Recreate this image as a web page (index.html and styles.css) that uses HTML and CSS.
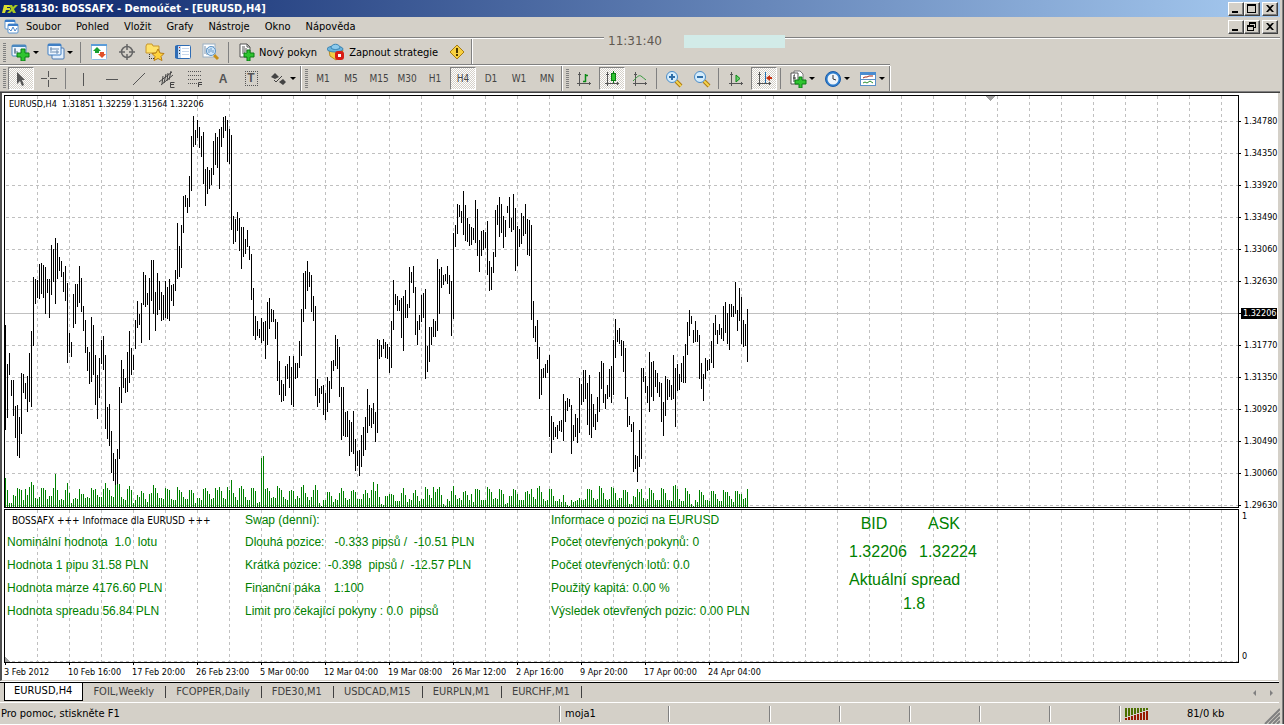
FILE: index.html
```html
<!DOCTYPE html>
<html lang="cs">
  <head>
    <meta charset="UTF-8" />
    <meta name="viewport" content="width=device-width, initial-scale=1.0" />
    <title>58130: BOSSAFX - Demoúčet - [EURUSD,H4]</title>
    <link rel="stylesheet" href="styles.css">
  </head>
  <body>
    <div class="window">
      <header class="titlebar">
        <svg class="logo" width="16" height="12" viewBox="0 0 16 12">
          <path d="M3 2h5v2H5v1h3v2H4l-1 3H0l2-8z" fill="#d8dc30" />
          <path d="M7 2h3l1 2 2-2h3l-4 4 2 4h-3l-1-2-2 2H5l4-4z" fill="#a8c820" />
        </svg>
        <h1>58130: BOSSAFX - Demoúčet - [EURUSD,H4]</h1>
        <div class="controls">
          <button aria-label="Minimalizovat"><svg width="12" height="10"><path d="M2 7h6v2H2z" /></svg></button>
          <button aria-label="Maximalizovat"><svg width="12" height="10"><path d="M1 0h9v9H1zM2 2v6h7V2z" fill-rule="evenodd" /></svg></button>
          <button class="close" aria-label="Zavřít"><svg width="12" height="10"><path d="M2 1h2l2 2 2-2h2L7 4.500 10 8H8L6 6 4 8H2l3-3.500z" /></svg></button>
        </div>
      </header>

      <nav class="menubar">
        <svg class="menu-icon" width="16" height="16" viewBox="0 0 16 16">
          <rect x="1" y="1" width="10" height="9" rx="1" fill="#fff" stroke="#5a94d0" />
          <path d="M1 2h10" stroke="#3a7cc8" stroke-width="2" />
          <rect x="4" y="5" width="10" height="9" rx="1" fill="#fff" stroke="#5a94d0" />
          <path d="M4 6h10" stroke="#3a7cc8" stroke-width="2" />
          <path d="M5 10l2 2 2-4 2 4 2-3" fill="none" stroke="#4a84c8" />
        </svg>
        <button>Soubor</button>
        <button>Pohled</button>
        <button>Vložit</button>
        <button>Grafy</button>
        <button>Nástroje</button>
        <button>Okno</button>
        <button>Nápověda</button>
        <div class="controls">
          <button aria-label="Minimalizovat graf"><svg width="12" height="10"><path d="M2 7h6v2H2z" /></svg></button>
          <button aria-label="Obnovit graf"><svg width="12" height="10"><path d="M3 0h7v6H8V5h1V2H4v1H3zM1 3h7v6H1zM2 5v3h5V5z" fill-rule="evenodd" /></svg></button>
          <button class="close" aria-label="Zavřít graf"><svg width="12" height="10"><path d="M2 1h2l2 2 2-2h2L7 4.500 10 8H8L6 6 4 8H2l3-3.500z" /></svg></button>
        </div>
      </nav>

      <div class="toolbars">
        <div class="toolbar-row upper">
          <div class="toolbar">
            <span class="grip"></span>
            <button class="drop" aria-label="Nový graf">
              <svg width="20" height="18" viewBox="0 0 20 18">
                <rect x="1" y="2" width="14" height="11" rx="1" fill="#eef6ff" stroke="#4a88c0" />
                <path d="M1 3h14" stroke="#4a88c0" stroke-width="2" />
                <path d="M4 5v6M3 9h4M3 7h2" stroke="#58748c" />
                <path d="M10 6h4v4h4v4h-4v4h-4v-4H6v-4h4z" fill="#2fc42f" stroke="#0a7d14" />
              </svg>
            </button>
            <button class="drop" aria-label="Profily">
              <svg width="18" height="18" viewBox="0 0 18 18">
                <rect x="5" y="5" width="12" height="11" rx="1" fill="#e4f0fc" stroke="#4a78b0" />
                <rect x="1" y="1" width="13" height="11" rx="1" fill="#eef6ff" stroke="#3f7fc4" />
                <path d="M1 2h13" stroke="#3f7fc4" stroke-width="2" />
                <path d="M3 6h9M3 9h9M4 4v4M10 7v4" stroke="#6a8cb0" />
              </svg>
            </button>
            <span class="sep"></span>
            <button aria-label="Přehled trhu">
              <svg width="16" height="16" viewBox="0 0 16 16">
                <rect x="0.500" y="0.500" width="15" height="15" rx="1" fill="#fff" stroke="#8fbce4" />
                <path d="M0 1h16" stroke="#5b9cd8" stroke-width="2" />
                <path d="M6 3l4 4H8v2H4V7H2z" fill="#19a030" />
                <path d="M11 14l-4-4h2V8h4v2h2z" fill="#e05028" />
              </svg>
            </button>
            <button aria-label="Okno dat">
              <svg width="16" height="16" viewBox="0 0 16 16" fill="none" stroke="#666" stroke-width="1.500">
                <circle cx="8" cy="8" r="5.500" />
                <path d="M8 0v6M8 10v6M0 8h6M10 8h6" />
              </svg>
            </button>
            <button aria-label="Navigátor">
              <svg width="20" height="18" viewBox="0 0 20 18">
                <path d="M1 3l1-2h5l1 2h6v7H1z" fill="#ffe26a" stroke="#c8962c" />
                <path d="M4.500 11v6M6 15.500h3" stroke="#333" stroke-dasharray="1 1" />
                <path d="M13 6l2 4 4 .500-3 3 1 4-4-2-4 2 1-4-3-3 4-.500z" fill="#ffd23c" stroke="#b87c14" />
              </svg>
            </button>
            <button aria-label="Terminál">
              <svg width="16" height="16" viewBox="0 0 16 16">
                <rect x="0.500" y="1.500" width="15" height="13" rx="1" fill="#fff" stroke="#2f6cb4" />
                <path d="M0 2h3v12H0z" fill="#2f6cb4" />
                <path d="M3 2h3v12H3z" fill="#c4dcf4" />
                <path d="M7 4.500h7M7 7.500h7M7 10.500h7" stroke="#c8d8ec" />
                <path d="M4 3h1v1H4z" fill="#c02020" />
                <path d="M4 6h1v1H4zM4 9h1v1H4z" fill="#333" />
              </svg>
            </button>
            <button aria-label="Tester strategií">
              <svg width="18" height="18" viewBox="0 0 18 18">
                <rect x="1" y="1" width="12" height="13" fill="#fff" stroke="#9ab0c4" />
                <path d="M3 3v8M5 5v7M11 3v5" stroke="#7890a8" />
                <path d="M12 12l4 4" stroke="#c89018" stroke-width="3" />
                <circle cx="9" cy="8" r="4.500" fill="#cfe6fa" stroke="#5a94c8" />
                <path d="M7 10V6M9 9V5M11 10V7" stroke="#6898c4" />
              </svg>
            </button>
            <span class="sep"></span>
            <button class="labelled">
              <svg width="17" height="18" viewBox="0 0 17 18">
                <path d="M2 1h7l3 3v10H2z" fill="#fff" stroke="#555" />
                <path d="M9 1v3h3M4 4h3M4 6h5M4 8h5M4 10h3" fill="none" stroke="#555" />
                <path d="M9 7h3v3h4v4h-4v4H9v-4H6v-4h3z" fill="#2fc42f" stroke="#0a7d14" />
              </svg>
              Nový pokyn
            </button>
            <button class="labelled">
              <svg width="18" height="18" viewBox="0 0 18 18">
                <path d="M2 7h14l-2 6-5 4-6-4z" fill="#f4cc44" stroke="#b88a20" />
                <ellipse cx="8" cy="6" rx="8" ry="3" fill="#6cb4dc" stroke="#3a84b4" />
                <path d="M4 5c0-5 9-5 9 0-2 2-7 2-9 0z" fill="#8ccaec" stroke="#3a84b4" />
                <rect x="8" y="8" width="9" height="9" rx="3" fill="#d81c14" />
                <path d="M11 11h3v3h-3z" fill="#fff" />
              </svg>
              Zapnout strategie
            </button>
            <button aria-label="Upozornění">
              <svg width="16" height="16" viewBox="0 0 16 16">
                <path d="M8 1l7 7-7 7-7-7z" fill="#f8d040" stroke="#a87c10" stroke-linejoin="round" />
                <path d="M7 4h2v5H7zM7 10h2v2H7z" fill="#4a3800" />
              </svg>
            </button>
          </div>
        </div>

        <div class="toolbar-row lower">
          <div class="toolbar">
            <span class="grip"></span>
            <button class="pressed" aria-label="Kurzor">
              <svg width="14" height="16" viewBox="0 0 14 16"><path d="M3 1l8 8H8l2 5-2 1-2-5-3 3z" fill="#555" /></svg>
            </button>
            <button aria-label="Zaměřovač">
              <svg width="16" height="16" viewBox="0 0 16 16" fill="#555"><path d="M7 0h1v6H7zM7 9h1v7H7zM0 7h6v1H0zM9 7h7v1H9z" /></svg>
            </button>
            <span class="sep"></span>
            <button aria-label="Svislá čára">
              <svg width="16" height="16" viewBox="0 0 16 16" fill="#555"><path d="M8 2h1v13H8z" /></svg>
            </button>
            <button aria-label="Vodorovná čára">
              <svg width="16" height="16" viewBox="0 0 16 16" fill="#555"><path d="M3 8h12v1H3z" /></svg>
            </button>
            <button aria-label="Trendová čára">
              <svg width="16" height="16" viewBox="0 0 16 16"><path d="M2 14L14 2" stroke="#555" /></svg>
            </button>
            <button aria-label="Ekvidistantní kanál">
              <svg width="18" height="18" viewBox="0 0 18 18" fill="none" stroke="#444">
                <path d="M1 12L14 2M3 15L15 5M5 6L4 14M8 4L6 13M10 3L9 11M13 1l-2 9" />
                <path d="M16.500 12.500h-4v5h4M12 14.500h4" />
              </svg>
            </button>
            <button aria-label="Fibonacci">
              <svg width="18" height="18" viewBox="0 0 18 18" fill="none" stroke="#555">
                <path d="M2 1.500h14M2 5.500h14M2 9.500h14M2 13.500h9" stroke-dasharray="1 1" />
                <path d="M16 12.500h-3.500V17M12 14.500h4" stroke="#444" />
              </svg>
            </button>
            <button class="glyph" aria-label="Text">A</button>
            <button class="glyph boxed" aria-label="Textový popisek"><span>T</span></button>
            <button class="drop" aria-label="Šipky">
              <svg width="18" height="16" viewBox="0 0 18 16" fill="#444">
                <path d="M5 2l4 4-4 2-4-2zM13 8l3 3-3 3-4-3z" />
                <path d="M4 9l2 2 6-6" fill="none" stroke="#444" stroke-width="1" />
              </svg>
            </button>
          </div>

          <div class="toolbar">
            <span class="grip"></span>
            <button class="period">M1</button>
            <button class="period">M5</button>
            <button class="period">M15</button>
            <button class="period">M30</button>
            <button class="period">H1</button>
            <button class="period pressed">H4</button>
            <button class="period">D1</button>
            <button class="period">W1</button>
            <button class="period">MN</button>
          </div>

          <div class="toolbar">
            <span class="grip"></span>
            <button aria-label="Sloupcový graf">
              <svg width="16" height="16" viewBox="0 0 16 16" fill="none" stroke="#555">
                <path d="M3.500 1v14M1 12.500h14M2 3.500h3M13.500 11v3" />
                <path d="M9.500 3v8M9 4.500h3M7 10.500h3" stroke="#0a8a14" stroke-width="1.500" />
              </svg>
            </button>
            <button class="pressed" aria-label="Svíčkový graf">
              <svg width="16" height="16" viewBox="0 0 16 16" fill="none" stroke="#555">
                <path d="M3.500 1v14M1 12.500h14M2 3.500h3M13.500 11v3" />
                <path d="M9.500 0v12" stroke="#0a7d14" />
                <rect x="7.500" y="2.500" width="4" height="7" fill="#2fc42f" stroke="#0a7d14" />
              </svg>
            </button>
            <button aria-label="Čárový graf">
              <svg width="16" height="16" viewBox="0 0 16 16" fill="none" stroke="#555">
                <path d="M3.500 1v14M1 12.500h14M2 3.500h3M13.500 11v3" />
                <path d="M1 10c5-5 6-6 8-5s3 3 5 4" stroke="#3a9a40" />
              </svg>
            </button>
            <span class="sep"></span>
            <button aria-label="Přiblížit">
              <svg width="18" height="18" viewBox="0 0 18 18">
                <path d="M11 11l5 5" stroke="#b07c10" stroke-width="4" />
                <path d="M11 11l5 5" stroke="#f4d450" stroke-width="2" />
                <circle cx="7" cy="7" r="5.500" fill="#d4ecfc" stroke="#4a8cc8" />
                <path d="M7 4v6M4 7h6" stroke="#2f6ea8" stroke-width="2" />
              </svg>
            </button>
            <button aria-label="Oddálit">
              <svg width="18" height="18" viewBox="0 0 18 18">
                <path d="M11 11l5 5" stroke="#b07c10" stroke-width="4" />
                <path d="M11 11l5 5" stroke="#f4d450" stroke-width="2" />
                <circle cx="7" cy="7" r="5.500" fill="#d4ecfc" stroke="#4a8cc8" />
                <path d="M4 7h6" stroke="#2f6ea8" stroke-width="2" />
              </svg>
            </button>
            <span class="sep"></span>
            <button aria-label="Automatický posun">
              <svg width="16" height="16" viewBox="0 0 16 16" fill="none" stroke="#555">
                <path d="M3.500 1v14M1 12.500h14M2 3.500h3M13.500 11v3" />
                <path d="M8 4l4 3.500L8 11z" fill="#6cd070" stroke="#0a8a14" />
              </svg>
            </button>
            <button class="pressed" aria-label="Odsazení grafu">
              <svg width="16" height="16" viewBox="0 0 16 16" fill="none" stroke="#555">
                <path d="M3.500 1v14M1 12.500h14M2 3.500h3M13.500 11v3" />
                <path d="M9.500 1v11" stroke="#2070b0" />
                <path d="M14 4v6l-4-3z" fill="#c83010" stroke="none" />
                <path d="M13 7h3" stroke="#c83010" stroke-width="2" />
              </svg>
            </button>
            <span class="sep"></span>
            <button class="drop" aria-label="Indikátory">
              <svg width="18" height="18" viewBox="0 0 18 18">
                <path d="M5 1h6l3 3v8H5z" fill="#fff" stroke="#777" />
                <path d="M2 3h7v11H2z" fill="#fff" stroke="#555" />
                <path d="M6 5H5v7M4 8h3" fill="none" stroke="#333" />
                <path d="M10 7h3v3h4v4h-4v4h-3v-4H6v-4h4z" fill="#2fc42f" stroke="#0a7d14" />
              </svg>
            </button>
            <button class="drop" aria-label="Periody">
              <svg width="18" height="18" viewBox="0 0 18 18">
                <circle cx="9" cy="9" r="7.500" fill="#2f80d0" stroke="#1c5ca8" />
                <circle cx="9" cy="9" r="5.500" fill="#eef4fa" />
                <path d="M9 5v4l3 1" fill="none" stroke="#333" />
              </svg>
            </button>
            <button class="drop" aria-label="Šablony">
              <svg width="18" height="16" viewBox="0 0 18 16">
                <rect x="1.500" y="1.500" width="15" height="13" fill="#fff" stroke="#5a90c8" />
                <path d="M1 2.500h16" stroke="#4a8cd0" stroke-width="3" />
                <path d="M2 8.500h14" stroke="#5a90c8" />
                <path d="M4 7l2-1h2l2-1h4" fill="none" stroke="#a02818" />
                <path d="M4 12l2-1 2 1 3-2 3 2" fill="none" stroke="#2a9030" />
              </svg>
            </button>
          </div>
        </div>
      </div>

      <main class="chart">
        <section class="plot price-plot" id="pricePlot">
          <svg class="layer" id="priceLayer"></svg>
          <p class="quote">EURUSD,H4  1.31851 1.32259 1.31564 1.32206</p>
        </section>
        <ul class="scale">
          <li>1.34780</li>
          <li>1.34350</li>
          <li>1.33920</li>
          <li>1.33490</li>
          <li>1.33060</li>
          <li>1.32630</li>
          <li class="current"><span>1.32206</span></li>
          <li>1.31770</li>
          <li>1.31350</li>
          <li>1.30920</li>
          <li>1.30490</li>
          <li>1.30060</li>
          <li>1.29630</li>
        </ul>

        <section class="plot info-plot" id="infoPlot">
          <svg class="layer" id="infoLayer"></svg>
          <div class="info">
            <div class="info-col">
              <p class="info-title">BOSSAFX +++ Informace dla EURUSD +++</p>
              <p>Nominální hodnota  1.0  lotu</p>
              <p>Hodnota 1 pipu 31.58 PLN</p>
              <p>Hodnota marze 4176.60 PLN</p>
              <p>Hodnota spreadu 56.84 PLN</p>
            </div>
            <div class="info-col">
              <p>Swap (denní):</p>
              <p>Dlouhá pozice:   -0.333 pipsů /  -10.51 PLN</p>
              <p>Krátká pozice:  -0.398  pipsů /  -12.57 PLN</p>
              <p>Finanční páka    1:100</p>
              <p>Limit pro čekající pokyny : 0.0  pipsů</p>
            </div>
            <div class="info-col">
              <p>Informace o pozici na EURUSD</p>
              <p>Počet otevřených pokynů: 0</p>
              <p>Počet otevřených lotů: 0.0</p>
              <p>Použitý kapitá: 0.00 %</p>
              <p>Výsledek otevřených pozic: 0.00 PLN</p>
            </div>
            <div class="spread">
              <p class="pair"><span>BID</span><span>ASK</span></p>
              <p class="pair"><span>1.32206</span><span>1.32224</span></p>
              <p>Aktuální spread</p>
              <p class="spread-value">1.8</p>
            </div>
          </div>
        </section>
        <div class="info-scale"><span>1</span><span>0</span></div>

        <ol class="times">
          <li>3 Feb 2012</li>
          <li>10 Feb 16:00</li>
          <li>17 Feb 20:00</li>
          <li>26 Feb 23:00</li>
          <li>5 Mar 00:00</li>
          <li>12 Mar 04:00</li>
          <li>19 Mar 08:00</li>
          <li>26 Mar 12:00</li>
          <li>2 Apr 16:00</li>
          <li>9 Apr 20:00</li>
          <li>17 Apr 00:00</li>
          <li>24 Apr 04:00</li>
        </ol>
      </main>

      <nav class="tabs">
        <button class="active">EURUSD,H4</button>
        <button>FOIL,Weekly</button>
        <button>FCOPPER,Daily</button>
        <button>FDE30,M1</button>
        <button>USDCAD,M15</button>
        <button>EURPLN,M1</button>
        <button>EURCHF,M1</button>
        <span class="scroll">
          <svg width="24" height="8" viewBox="0 0 24 8" fill="#808080"><path d="M5 1v6L2 4zM19 1v6l3-3z" /></svg>
        </span>
      </nav>

      <footer class="status">
        <span class="help">Pro pomoc, stiskněte F1</span>
        <span class="profile">moja1</span>
        <span class="cell wide"></span>
        <span class="cell"></span>
        <span class="cell"></span>
        <span class="cell"></span>
        <span class="cell"></span>
        <span class="cell"></span>
        <span class="traffic">
          <svg id="signal" width="24" height="12"></svg>
          <span>81/0 kb</span>
        </span>
        <svg class="resize" width="16" height="16" viewBox="0 0 16 16" stroke="#808080" stroke-width="2">
          <path d="M1 16L16 1M5 16L16 5M9 16l7-7M13 16l3-3" />
        </svg>
      </footer>

      <time class="clock">11:31:40</time>
      <div class="marker"></div>
    </div>
    <script src="chart.js"></script>
  </body>
</html>
```

FILE: styles.css
```css
* {
  box-sizing: border-box;
}

body {
  margin: 0;
  background-color: #fff;
  font-family: "DejaVu Sans Condensed", "DejaVu Sans", sans-serif;
  font-size: 11px;
  color: #000;
}

h1,
p,
ul,
ol {
  margin: 0;
  padding: 0;
  list-style: none;
}

svg {
  display: block;
  flex: none;
}

button {
  font: inherit;
  color: inherit;
  background: none;
  border: none;
  margin: 0;
  padding: 0;
}

.window {
  position: relative;
  background-color: #d4d0c8;
  border-right: 1px solid #404040;
  box-shadow: inset -1px 0 #808080;
  padding-right: 3px;
}

/* title and menu */
.titlebar {
  display: flex;
  align-items: center;
  height: 17px;
  padding: 0 2px;
  background: linear-gradient(to right, #0a246a, #a6caf0);
  color: #fff;
}

.titlebar h1 {
  font-size: 11px;
  margin-left: 2px;
  white-space: nowrap;
}

.controls {
  display: flex;
  margin-left: auto;
}

.controls button {
  display: flex;
  align-items: center;
  justify-content: center;
  width: 16px;
  height: 14px;
  padding: 0;
  background-color: #d4d0c8;
  border: 1px solid;
  border-color: #fff #404040 #404040 #fff;
  box-shadow: inset -1px -1px #808080;
}

.controls .close {
  margin-left: 2px;
}

.menubar {
  display: flex;
  align-items: center;
  height: 21px;
  padding: 0 2px 1px;
  border-bottom: 1px solid #808080;
}

.menu-icon {
  margin: 0 0 0 2px;
}

.menubar > button {
  padding: 0 8px;
  margin-right: -1px;
}

.menu-icon + button {
  padding-left: 6px;
}

/* toolbars */
.toolbars {
  border-top: 1px solid #fff;
  border-bottom: 1px solid #404040;
  box-shadow: inset 0 -1px #808080;
}

.toolbar-row {
  display: flex;
  height: 25px;
}

.toolbar-row.lower {
  width: max-content;
  height: 28px;
  border-top: 1px solid #808080;
  box-shadow: inset 0 1px #fff;
  padding: 1px 0;
}

.toolbar {
  display: flex;
  align-items: center;
  gap: 2px;
  padding: 0 1px 0 3px;
  border-right: 1px solid #808080;
  box-shadow: 1px 0 #fff;
}

.toolbar + .toolbar {
  margin-left: 1px;
}

.grip {
  width: 3px;
  height: 19px;
  background: repeating-linear-gradient(#808080 0 1px, #d4d0c8 1px 2px);
}

.sep {
  width: 2px;
  height: 21px;
  margin: 0 1px;
  border-left: 1px solid #808080;
}

.upper .toolbar {
  padding-top: 1px;
}

.upper .sep {
  margin: 0 2px;
}

.toolbar button {
  display: flex;
  align-items: center;
  justify-content: center;
  width: 26px;
  height: 23px;
}

.toolbar .drop {
  width: 33px;
  gap: 2px;
}

.drop::after {
  content: "";
  border: 3px solid transparent;
  border-top-color: #000;
  border-bottom: 0;
}

.toolbar .labelled {
  width: auto;
  padding: 0 4px;
  gap: 4px;
  white-space: nowrap;
}

.toolbar .pressed {
  background: repeating-conic-gradient(#fff 0 25%, #d4d0c8 0 50%) 0 0 / 2px 2px;
  border: 1px solid;
  border-color: #808080 #fff #fff #808080;
}

.toolbar .period {
  font-size: 10px;
  color: #444;
}

.toolbar .glyph {
  font-family: "Liberation Sans", Arial, sans-serif;
  font-size: 12px;
  font-weight: bold;
  color: #555;
}

.boxed span {
  width: 13px;
  line-height: 13px;
  border: 1px dotted #555;
}

/* chart */
.chart {
  display: grid;
  grid-template-columns: 1fr 39px;
  padding: 2px 0 0 2px;
  margin-right: 1px;
  background-color: #fff;
  border-left: 2px solid #505050;
  border-right: 1px solid #d4d0c8;
  border-bottom: 1px solid #d4d0c8;
  font-size: 9px;
}

.plot {
  position: relative;
  border: 1px solid #000;
}

.price-plot {
  height: 413px;
  margin-bottom: 1px;
}

.info-plot {
  height: 154px;
}

.layer {
  position: absolute;
  left: 0;
  top: 0;
  width: 100%;
  height: 100%;
}

.quote {
  position: relative;
  padding: 2px 4px;
  line-height: 12px;
  white-space: pre;
}

.scale {
  padding-top: 10px;
}

.scale li {
  display: flex;
  align-items: center;
  height: 32px;
  gap: 3px;
}

/* the lowest level sits on the frame of the plot */
.scale li:last-child {
  margin-bottom: -12px;
}

.scale li::before {
  content: "";
  width: 2px;
  height: 1px;
  background-color: #000;
}

.scale .current {
  gap: 0;
}

.current span {
  padding: 0 1px 0 2px;
  line-height: 11px;
  background-color: #000;
  color: #fff;
}

.info {
  position: relative;
  display: grid;
  grid-template-columns: 238px 306px 298px auto;
  padding-left: 2px;
  font-family: "Liberation Sans", Arial, sans-serif;
  font-size: 12px;
  color: #008000;
}

.info p {
  line-height: 23px;
  white-space: pre;
}

.info-col p:first-child {
  line-height: 21px;
}

.info .info-title {
  padding-left: 5px;
  font-family: "DejaVu Sans Condensed", "DejaVu Sans", sans-serif;
  font-size: 10px;
  color: #000;
}

.spread {
  width: 130px;
  font-size: 16px;
}

.info .spread p {
  line-height: 28px;
}

.info .spread .spread-value {
  line-height: 20px;
  text-align: center;
}

.pair {
  display: grid;
  grid-template-columns: 58px 58px;
  gap: 12px;
}

.pair:first-child {
  text-align: center;
  padding-right: 8px;
  grid-template-columns: 50px 66px;
}

.info-scale {
  display: flex;
  flex-direction: column;
  justify-content: space-between;
  padding: 2px 3px;
}

.times {
  display: flex;
  height: 17px;
}

.times li {
  width: 64px;
  white-space: nowrap;
  line-height: 15px;
}

.times li::before {
  content: "";
  display: block;
  width: 1px;
  height: 2px;
  margin-left: 1px;
  background-color: #000;
}

/* sheet tabs */
.tabs {
  display: flex;
  height: 21px;
  margin: 1px 1px 0 0;
  padding-left: 4px;
  border-top: 1px solid #000;
  border-bottom: 1px solid #fff;
  box-shadow: 0 -1px #fff;
  color: #404040;
}

.tabs button {
  position: relative;
  height: 18px;
  padding: 0 12px 2px 10px;
}

.tabs button:not(.active)::after {
  content: "";
  position: absolute;
  right: 0;
  top: 3px;
  width: 1px;
  height: 12px;
  background-color: #404040;
}

.tabs .active {
  padding: 0 10px 2px 9px;
  background-color: #fff;
  color: #000;
  border: 1px solid #000;
  border-top: none;
}

.scroll {
  margin: 6px 4px 0 auto;
}

/* status bar */
.status {
  display: flex;
  align-items: center;
  height: 21px;
}

.status > span {
  height: 16px;
  line-height: 16px;
}

.status > span + span {
  border-left: 1px solid #808080;
  box-shadow: inset 1px 0 #fff;
}

.help {
  flex: 1;
  padding-left: 1px;
}

.profile {
  width: 109px;
  padding-left: 5px;
}

.cell {
  width: 70px;
}

.wide {
  width: 101px;
}

.traffic {
  display: flex;
  align-items: center;
  gap: 38px;
  width: 145px;
  padding-left: 5px;
}

.resize {
  align-self: flex-end;
}

/* clock and marker floating over the toolbars */
.clock,
.marker {
  position: absolute;
  top: 35px;
  height: 13px;
}

.clock {
  left: 604px;
  width: 80px;
  padding-left: 4px;
  line-height: 13px;
  font-family: "DejaVu Sans", sans-serif;
  font-size: 12px;
  color: #605850;
  background-color: #d4d0c8;
}

.marker {
  left: 684px;
  width: 101px;
  background-color: #d2ebe8;
}
```

FILE: chart.js
```js
// Each bar is "top-bottom", in pixels from the top of the plot
const bars = `
229-334 268-322 257-279 284-300 284-320 310-342 309-360 321-362 277-338 278-297
287-303 280-316 257-306 235-311 181-250 183-208 184-202 168-203 167-198 169-202
171-218 183-197 183-222 149-199 153-186 142-208 147-183 161-175 165-181 176-196
170-205 187-267 237-257 246-261 198-232 188-228 188-211 170-207 182-216 210-235
224-257 251-275 256-288 221-286 229-279 259-309 279-323 262-302 244-268 240-274
259-333 311-343 308-350 335-377 357-385 363-389 353-388 291-363 264-307 273-292
282-297 256-296 235-287 252-279 259-274 224-253 205-232 218-229 207-247 176-209
179-211 197-209 182-244 164-205 164-218 196-235 177-219 185-214 196-225 199-224
185-222 191-223 183-225 189-205 188-210 174-195 127-183 150-181 129-172 100-137
99-111 102-117 80-111 40-95 20-51 34-49 24-42 31-52 40-61 36-88
73-110 71-98 74-93 72-89 45-79 37-69 41-72 33-93 31-51 21-42
20-35 24-66 33-68 39-134 120-148 123-146 116-135 122-155 131-173 131-161
143-158 134-151 150-164 158-204 192-240 220-244 225-240 233-242 222-247 226-245
225-263 206-249 202-233 213-226 214-226 223-243 226-285 265-299 284-306 288-305
270-300 268-283 260-292 271-309 260-311 267-283 267-282 245-272 213-260 177-226
175-213 165-195 176-191 179-216 200-225 210-300 283-311 292-307 290-298 289-319
297-324 281-316 285-307 265-293 264-275 239-270 243-273 251-301 291-344 291-340
316-341 315-341 324-360 326-356 315-358 343-375 355-370 354-380 339-371 331-360
321-354 293-337 309-330 312-332 307-328 316-346 243-337 244-263 249-261 243-253
246-262 248-263 251-277 225-272 184-234 198-209 200-215 204-215 202-242 200-255
194-222 208-222 171-212 176-187 170-197 191-239 225-249 219-234 199-226 197-222
193-283 250-276 231-266 231-249 223-241 225-241 163-235 173-218 171-192 179-189
178-185 170-188 179-198 185-240 137-223 129-151 108-138 109-121 115-127 95-139
109-145 122-146 128-150 131-149 132-144 104-147 113-160 144-176 135-160 134-154
136-152 125-179 165-195 171-194 156-177 114-161 109-129 101-141 108-137 120-152
124-141 110-117 101-132 122-136 98-134 112-175 130-170 133-151 117-148 120-140
108-138 123-159 124-160 129-224 205-242 230-246 224-263 251-303 273-299 272-282
268-282 264-277 259-341 320-357 326-344 331-341 329-343 325-335 324-336 298-345
305-326 302-315 303-311 309-358 329-345 318-341 322-347 282-337 288-309 274-306
274-303 287-329 279-339 298-342 308-331 318-334 301-326 276-316 265-293 267-307
298-313 289-303 273-301 270-307 244-299 223-262 234-246 232-248 244-260 245-276
252-303 301-331 320-329 328-336 326-376 359-373 360-386 334-371 272-363 272-286
280-297 290-307 256-316 266-301 265-305 274-291 277-297 286-301 287-326 306-340
280-320 283-304 284-301 289-304 259-303 272-331 268-295 278-294 267-286 260-287
248-287 226-259 214-240 220-228 234-247 225-246 234-246 239-283 267-293 278-305
262-283 264-275 263-274 245-267 227-272 219-239 234-248 228-239 232-243 210-245
206-237 217-248 208-254 208-221 210-221 186-218 214-235 192-225 201-248 224-251
228-250 213-266`;

const volumes = `
29 17 4 4 12 11 19 18 17 7 18 12 20 25 22 9 8 10 19 19 17 8 11 11 19 33 17 7 8 7
17 24 14 4 8 9 8 18 13 13 9 10 9 19 17 18 12 10 10 18 24 19 17 11 10 22 23 23 10 8
7 18 21 17 4 7 12 10 16 14 8 5 13 14 22 19 14 9 9 8 19 18 17 8 7 7 20 17 15 10
8 8 17 17 14 4 9 9 7 18 19 16 13 8 9 19 17 20 16 9 8 20 17 27 14 10 7 19
21 18 10 7 7 19 19 16 4 5 49 51 18 19 16 9 10 9 21 19 17 10 8 7 16 17 16 8 11 9
20 22 14 10 7 10 17 22 17 4 1 7 7 15 15 11 5 8 7 14 19 16 9 7 8 16 17 15 8 8
8 13 17 14 9 17 25 16 23 10 3 2 11 11 13 13 12 6 6 6 14 19 12 5 8 7 14 17 11 6
8 8 20 18 12 9 20 15 18 20 12 3 1 8 6 16 21 12 8 9 7 15 16 12 7 13 5 18 18 17
7 7 7 20 18 15 8 9 8 18 17 13 3 4 11 11 18 17 13 7 7 7 15 16 13 18 10 8 19 21
15 8 6 7 18 18 11 6 6 8 5 12 5 2 1 7 5 6 7 9 7 7 8 18 18 17 9 7 8 21
19 14 8 7 8 20 19 14 7 9 9 17 17 15 3 3 11 10 18 15 18 9 6 8 19 17 14 7 7 7
19 18 14 7 7 6 21 22 18 8 6 6 19 16 13 3 1 7 5 17 15 12 7 7 6 16 16 13 8 6
6 17 15 15 11 8 5 16 16 13 13 8 9 18`;

const GRID = 32;

function path(d, attrs) {
  return `<path d="${d}" ${attrs} shape-rendering="crispEdges" />`;
}

// Dashed vertical grid lines, as many as fit in the width
function columns(width, height) {
  let d = "";
  for (let x = GRID; x < width; x += GRID) {
    d += `M${x + 0.5} 0V${height}`;
  }
  return d;
}

function drawPrices() {
  const plot = document.getElementById("pricePlot");
  const width = plot.clientWidth;
  const height = plot.clientHeight;
  const dash = 'fill="none" stroke="#c0c0c0" stroke-dasharray="3 3"';

  let grid = columns(width, height);
  for (let y = 25; y < height; y += GRID) {
    grid += `M1 ${y + 0.5}H${width}`;
  }

  let volume = "";
  volumes.trim().split(/\s+/).forEach((v, i) => {
    volume += `M${i * 2} ${height - v}h1v${v}h-1z`;
  });

  let price = "";
  bars.trim().split(/\s+/).forEach((bar, i) => {
    const [top, bottom] = bar.split("-").map(Number);
    price += `M${i * 2} ${top}h1v${bottom - top}h-1z`;
  });

  document.getElementById("priceLayer").innerHTML =
    path(grid, dash) +
    path(`M0 217h${width}v1H0z`, 'fill="#c0c0c0"') +
    path(volume, 'fill="#008000"') +
    path(price, 'fill="#000"') +
    path("M980 0h10l-5 5z", 'fill="#a0a0a0"');
}

function drawInfo() {
  const plot = document.getElementById("infoPlot");
  const width = plot.clientWidth;
  const height = plot.clientHeight;
  const dash = 'fill="none" stroke="#c0c0c0" stroke-dasharray="3 3"';

  document.getElementById("infoLayer").innerHTML =
    path(columns(width, height) + `M1 ${height - 0.5}H${width}`, dash) +
    path(`M0 ${height - 5}l5 5H0z`, 'fill="#a0a0a0"');
}

// Connection strength: green columns over rising red ones
function drawSignal() {
  let out = "";
  for (let i = 0; i < 8; i++) {
    const red = 2 + i;
    out += path(`M${i * 3} 0h2v${11 - red}h-2z`, 'fill="#4c7000"');
    out += path(`M${i * 3} ${12 - red}h2v${red}h-2z`, 'fill="#981800"');
  }
  document.getElementById("signal").innerHTML = out;
}

function draw() {
  drawPrices();
  drawInfo();
}

draw();
drawSignal();
window.addEventListener("resize", draw);
```
